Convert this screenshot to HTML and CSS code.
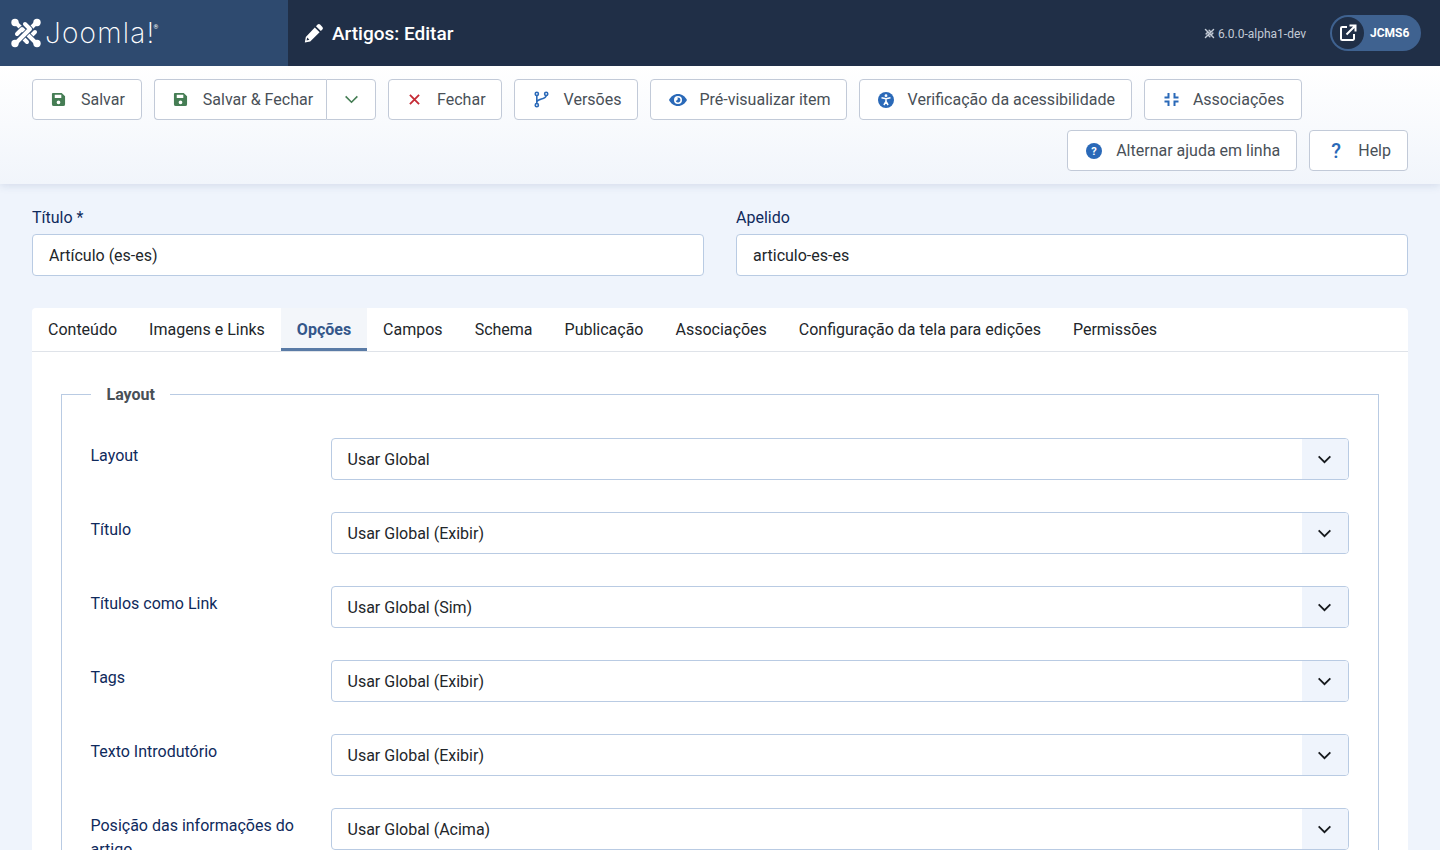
FILE: index.html
```html
<!DOCTYPE html>
<html lang="pt-BR">
<head>
<meta charset="utf-8">
<title>Artigos: Editar</title>
<link rel="stylesheet" href="styles.css">
</head>
<body>
<header class="topbar">
  <div class="brand">
    <svg class="brand-mark" viewBox="0 0 30 30" width="30" height="30" fill="none" stroke-linecap="round" stroke-linejoin="round">
      <path stroke="#2e4a6f" stroke-width="5.800" d="M4 4 19 19 24 14"/>
      <path stroke="#fff" stroke-width="4" d="M4 4 19 19 24 14"/>
      <path stroke="#2e4a6f" stroke-width="5.800" d="M26 4 11 19 16 24"/>
      <path stroke="#fff" stroke-width="4" d="M26 4 11 19 16 24"/>
      <path stroke="#2e4a6f" stroke-width="5.800" d="M26 26 11 11 6 16"/>
      <path stroke="#fff" stroke-width="4" d="M26 26 11 11 6 16"/>
      <path stroke="#2e4a6f" stroke-width="5.800" d="M4 26 19 11 14 6"/>
      <path stroke="#fff" stroke-width="4" d="M4 26 19 11 14 6"/>
      <g fill="#fff">
        <circle cx="4" cy="4.500" r="3.700"/><circle cx="26" cy="4.500" r="3.700"/>
        <circle cx="4" cy="25.500" r="3.700"/><circle cx="26" cy="25.500" r="3.700"/>
      </g>
    </svg>
    <span class="brand-word">Joomla!</span><sup class="brand-reg">®</sup>
  </div>
  <div class="page-title">
    <svg class="title-icon" viewBox="0 0 20 20" width="20" height="20"><path fill="#fff" fill-rule="evenodd" d="M13.600 1.600a1.800 1.800 0 0 1 2.500 0l2.300 2.300a1.800 1.800 0 0 1 0 2.500l-1.600 1.600-4.800-4.800zM10.800 4.400l4.800 4.800-9.400 9.400-5.400 1 1-5.600zM3.300 14.600l-.8 2.900 2.900-.8z"/></svg>
    <h1>Artigos: Editar</h1>
  </div>
  <div class="top-right">
    <span class="version">
      <svg viewBox="0 0 30 30" width="11" height="11" fill="none" stroke="#c3cbd6" stroke-width="4" stroke-linecap="round"><path d="M4 4 19 19 24 14M26 4 11 19 16 24M26 26 11 11 6 16M4 26 19 11 14 6"/></svg>
      6.0.0-alpha1-dev
    </span>
    <a class="site-pill">
      <span class="site-circle">
        <svg viewBox="0 0 18 18" width="18" height="18" fill="none" stroke="#fff" stroke-width="2"><path d="M8 3H3.200A1.200 1.200 0 0 0 2 4.200v10.600A1.200 1.200 0 0 0 3.200 16h10.600a1.200 1.200 0 0 0 1.200-1.200V10"/><path d="M7.500 10.500 16 2M10.500 1.500H16.500V7.500"/></svg>
      </span>
      <span class="site-name">JCMS6</span>
    </a>
  </div>
</header>

<nav class="toolbar">
  <button class="btn"><span class="ico ico-tight"><svg viewBox="0 0 16 16" width="15" height="15"><path fill="#457d54" fill-rule="evenodd" d="M2 1h9.400L15 4.600V13a2 2 0 0 1-2 2H3a2 2 0 0 1-2-2V2a1 1 0 0 1 1-1zm2 2v3.400h7V3zm4 6a2 2 0 1 0 0 4 2 2 0 0 0 0-4z"/></svg></span>Salvar</button>
  <div class="btn-group">
    <button class="btn btn-main"><span class="ico ico-tight"><svg viewBox="0 0 16 16" width="15" height="15"><path fill="#457d54" fill-rule="evenodd" d="M2 1h9.400L15 4.600V13a2 2 0 0 1-2 2H3a2 2 0 0 1-2-2V2a1 1 0 0 1 1-1zm2 2v3.400h7V3zm4 6a2 2 0 1 0 0 4 2 2 0 0 0 0-4z"/></svg></span>Salvar &amp; Fechar</button>
    <button class="btn btn-caret"><svg viewBox="0 0 16 10" width="15" height="9" fill="none" stroke="#457d54" stroke-width="1.800"><path d="M1.500 1.500 8 8l6.500-6.500"/></svg></button>
  </div>
  <button class="btn btn-trim"><span class="ico ico-close"><svg viewBox="0 0 12 12" width="11" height="11" fill="none" stroke="#c52a35" stroke-width="2"><path d="M1 1l10 10M11 1 1 11"/></svg></span>Fechar</button>
  <button class="btn"><span class="ico ico-wide"><svg viewBox="0 0 16 18" width="15" height="17" fill="none" stroke="#2a69b8" stroke-width="1.700"><circle cx="3" cy="3" r="1.700"/><circle cx="3" cy="15" r="1.700"/><circle cx="13" cy="3" r="1.700"/><path d="M3 4.700v8.600M13 4.700C13 9 3 8 3 12"/></svg></span>Versões</button>
  <button class="btn btn-trim"><span class="ico ico-tight"><svg viewBox="0 0 18 12" width="18" height="12"><path fill="#2a69b8" fill-rule="evenodd" d="M9 0c4 0 7.300 2.600 9 6-1.700 3.400-5 6-9 6S1.700 9.400 0 6c1.700-3.400 5-6 9-6zm0 2a4 4 0 1 0 0 8 4 4 0 0 0 0-8zm0 1.500a2.500 2.500 0 1 1-2.400 3.200A2 2 0 0 0 8.400 3.600 2.500 2.500 0 0 1 9 3.500z"/></svg></span>Pré-visualizar item</button>
  <button class="btn"><span class="ico ico-tight"><svg viewBox="0 0 16 16" width="16" height="16"><circle cx="8" cy="8" r="8" fill="#2a69b8"/><circle cx="8" cy="3.700" r="1.400" fill="#fff"/><path fill="none" stroke="#fff" stroke-width="1.500" d="M3.500 5.800 8 6.800l4.500-1M8 6.800v2.700M8 9.500 5.900 13M8 9.500l2.100 3.500"/></svg></span>Verificação da acessibilidade</button>
  <button class="btn btn-roomy"><span class="ico"><svg viewBox="0 0 15 15" width="15" height="15" fill="none" stroke="#2a69b8" stroke-width="2"><path d="M4.500 1v4.500H.500M10.500 1v4.500h4M4.500 14V9.500H.500M10.500 14V9.500h4"/></svg></span>Associações</button>
  <button class="btn btn-push"><span class="ico ico-tight"><svg viewBox="0 0 16 16" width="16" height="16"><circle cx="8" cy="8" r="8" fill="#2a69b8"/><text x="8" y="12" text-anchor="middle" class="qmark">?</text></svg></span>Alternar ajuda em linha</button>
  <button class="btn"><span class="ico ico-q">?</span>Help</button>
</nav>

<main class="content">
  <div class="title-row">
    <div class="field">
      <label class="field-label">Título *</label>
      <div class="input">Artículo (es-es)</div>
    </div>
    <div class="field">
      <label class="field-label">Apelido</label>
      <div class="input">articulo-es-es</div>
    </div>
  </div>

  <section class="card">
    <div class="tabs">
      <span class="tab">Conteúdo</span>
      <span class="tab">Imagens e Links</span>
      <span class="tab tab-active">Opções</span>
      <span class="tab">Campos</span>
      <span class="tab">Schema</span>
      <span class="tab">Publicação</span>
      <span class="tab">Associações</span>
      <span class="tab">Configuração da tela para edições</span>
      <span class="tab">Permissões</span>
    </div>
    <div class="panel">
      <fieldset class="group">
        <legend>Layout</legend>
        <div class="row"><label>Layout</label><div class="select"><span>Usar Global</span><i class="caret"><svg viewBox="0 0 16 10" width="15" height="9" fill="none" stroke="#16191d" stroke-width="2"><path d="M1.500 1.500 8 8l6.500-6.500"/></svg></i></div></div>
        <div class="row"><label>Título</label><div class="select"><span>Usar Global (Exibir)</span><i class="caret"><svg viewBox="0 0 16 10" width="15" height="9" fill="none" stroke="#16191d" stroke-width="2"><path d="M1.500 1.500 8 8l6.500-6.500"/></svg></i></div></div>
        <div class="row"><label>Títulos como Link</label><div class="select"><span>Usar Global (Sim)</span><i class="caret"><svg viewBox="0 0 16 10" width="15" height="9" fill="none" stroke="#16191d" stroke-width="2"><path d="M1.500 1.500 8 8l6.500-6.500"/></svg></i></div></div>
        <div class="row"><label>Tags</label><div class="select"><span>Usar Global (Exibir)</span><i class="caret"><svg viewBox="0 0 16 10" width="15" height="9" fill="none" stroke="#16191d" stroke-width="2"><path d="M1.500 1.500 8 8l6.500-6.500"/></svg></i></div></div>
        <div class="row"><label>Texto Introdutório</label><div class="select"><span>Usar Global (Exibir)</span><i class="caret"><svg viewBox="0 0 16 10" width="15" height="9" fill="none" stroke="#16191d" stroke-width="2"><path d="M1.500 1.500 8 8l6.500-6.500"/></svg></i></div></div>
        <div class="row"><label>Posição das informações do artigo</label><div class="select"><span>Usar Global (Acima)</span><i class="caret"><svg viewBox="0 0 16 10" width="15" height="9" fill="none" stroke="#16191d" stroke-width="2"><path d="M1.500 1.500 8 8l6.500-6.500"/></svg></i></div></div>
      </fieldset>
    </div>
  </section>
</main>
</body>
</html>
```
FILE: styles.css
```css
* { box-sizing: border-box; }
html, body { margin: 0; height: 850px; overflow: hidden; }
body { background: #eff4fc; font-family: Roboto, "Liberation Sans", sans-serif; font-size: 16px; color: #22262a; }

.topbar { display: flex; align-items: center; height: 66px; background: #202f47; color: #fff; }
.brand { display: flex; align-items: center; width: 288px; height: 100%; padding-left: 11px; background: #2e4a6f; }
.brand-mark { flex: none; }
.brand-word { margin-left: 4px; font-family: Inter, Roboto, sans-serif; font-weight: 200; font-size: 28px; letter-spacing: 1.200px; line-height: 1; }
.brand-reg { font-size: 6px; align-self: flex-start; margin-top: 23px; margin-left: -2px; }
.page-title { display: flex; align-items: center; padding-left: 16px; }
.title-icon { margin-right: 8px; }
.page-title h1 { margin: 0; font-size: 19px; font-weight: 500; line-height: 1; }
.top-right { display: flex; align-items: center; margin-left: auto; padding-right: 19px; }
.version { display: flex; align-items: center; gap: 3px; padding-top: 1px; font-size: 12px; color: #c3cbd6; margin-right: 24px; }
.site-pill { display: flex; align-items: center; width: 91px; height: 36px; border-radius: 18px; background: #3f6290; padding-left: 2px; }
.site-circle { display: flex; align-items: center; justify-content: center; width: 32px; height: 32px; border-radius: 50%; background: #202f47; }
.site-name { margin-left: 6px; font-size: 12px; font-weight: 700; }

.toolbar { display: flex; flex-wrap: wrap; align-content: flex-start; gap: 10px 12px; height: 118px; padding: 13px 32px 0; background: linear-gradient(#fff, #f1f5fb); box-shadow: 0 2px 8px rgba(40, 70, 120, .13); }
.btn { display: flex; align-items: center; height: 41px; padding: 0 16px; border: 1px solid #c2cad8; border-radius: 4px; background: #fff; font: 400 16px Roboto, sans-serif; color: #495057; white-space: nowrap; }
.btn-trim { padding-right: 15px; }
.btn-roomy { padding-right: 17px; }
.ico { display: flex; align-items: center; width: 32px; height: 20px; padding-left: 3px; flex: none; }
.ico-close { padding-left: 4px; }
.ico-tight { padding-left: 2px; }
.ico-wide { width: 33px; }
.ico-q { color: #2a69b8; font-size: 20px; font-weight: 500; padding-left: 5px; }
.qmark { font: 700 11px Roboto, sans-serif; fill: #fff; }
.btn-push { margin-left: auto; }
.btn-group { display: flex; }
.btn-main { border-radius: 4px 0 0 4px; border-right: 0; padding-right: 13px; }
.btn-caret { width: 50px; padding: 0; justify-content: center; border-radius: 0 4px 4px 0; }

.content { padding: 23px 32px 0; }
.title-row { display: grid; grid-template-columns: 1fr 1fr; gap: 32px; }
.field-label { display: block; margin-bottom: 6px; line-height: 21px; color: #0f2a5c; }
.input { height: 42px; padding: 0 16px; display: flex; align-items: center; background: #fff; border: 1px solid #b9cbe3; border-radius: 4px; }

.card { margin-top: 32px; background: #fff; border-radius: 4px 4px 0 0; }
.tabs { display: flex; height: 44px; border-bottom: 1px solid #dfe3e9; }
.tab { display: flex; align-items: center; height: 43px; padding: 0 16px; color: #22262a; }
.tab-active { color: #34578a; font-weight: 700; background: #f3f6fa; border-bottom: 3px solid #5a7ba6; padding-top: 3px; }
.panel { padding: 31px 29px 0; }
.group { margin: 0; padding: 32px 29px 0 28.500px; border: 1px solid #b9cbe3; min-width: 0; }
.group legend { margin-left: 0.500px; padding: 1px 15.500px 0; font-weight: 700; color: #495057; line-height: 22px; }
.row { display: flex; min-height: 42px; margin-bottom: 32px; }
.row label { width: 240.500px; flex: none; padding: 6px 20px 0 0; line-height: 24px; color: #0f2a5c; }
.select { flex: 1; display: flex; align-items: center; justify-content: space-between; height: 42px; padding-left: 15.500px; background: #fff; border: 1px solid #b9cbe3; border-radius: 4px; overflow: hidden; }
.caret { display: flex; align-items: center; justify-content: center; width: 46px; height: 100%; background: #eff4fc; padding: 1px 2px 0 0; }
```
